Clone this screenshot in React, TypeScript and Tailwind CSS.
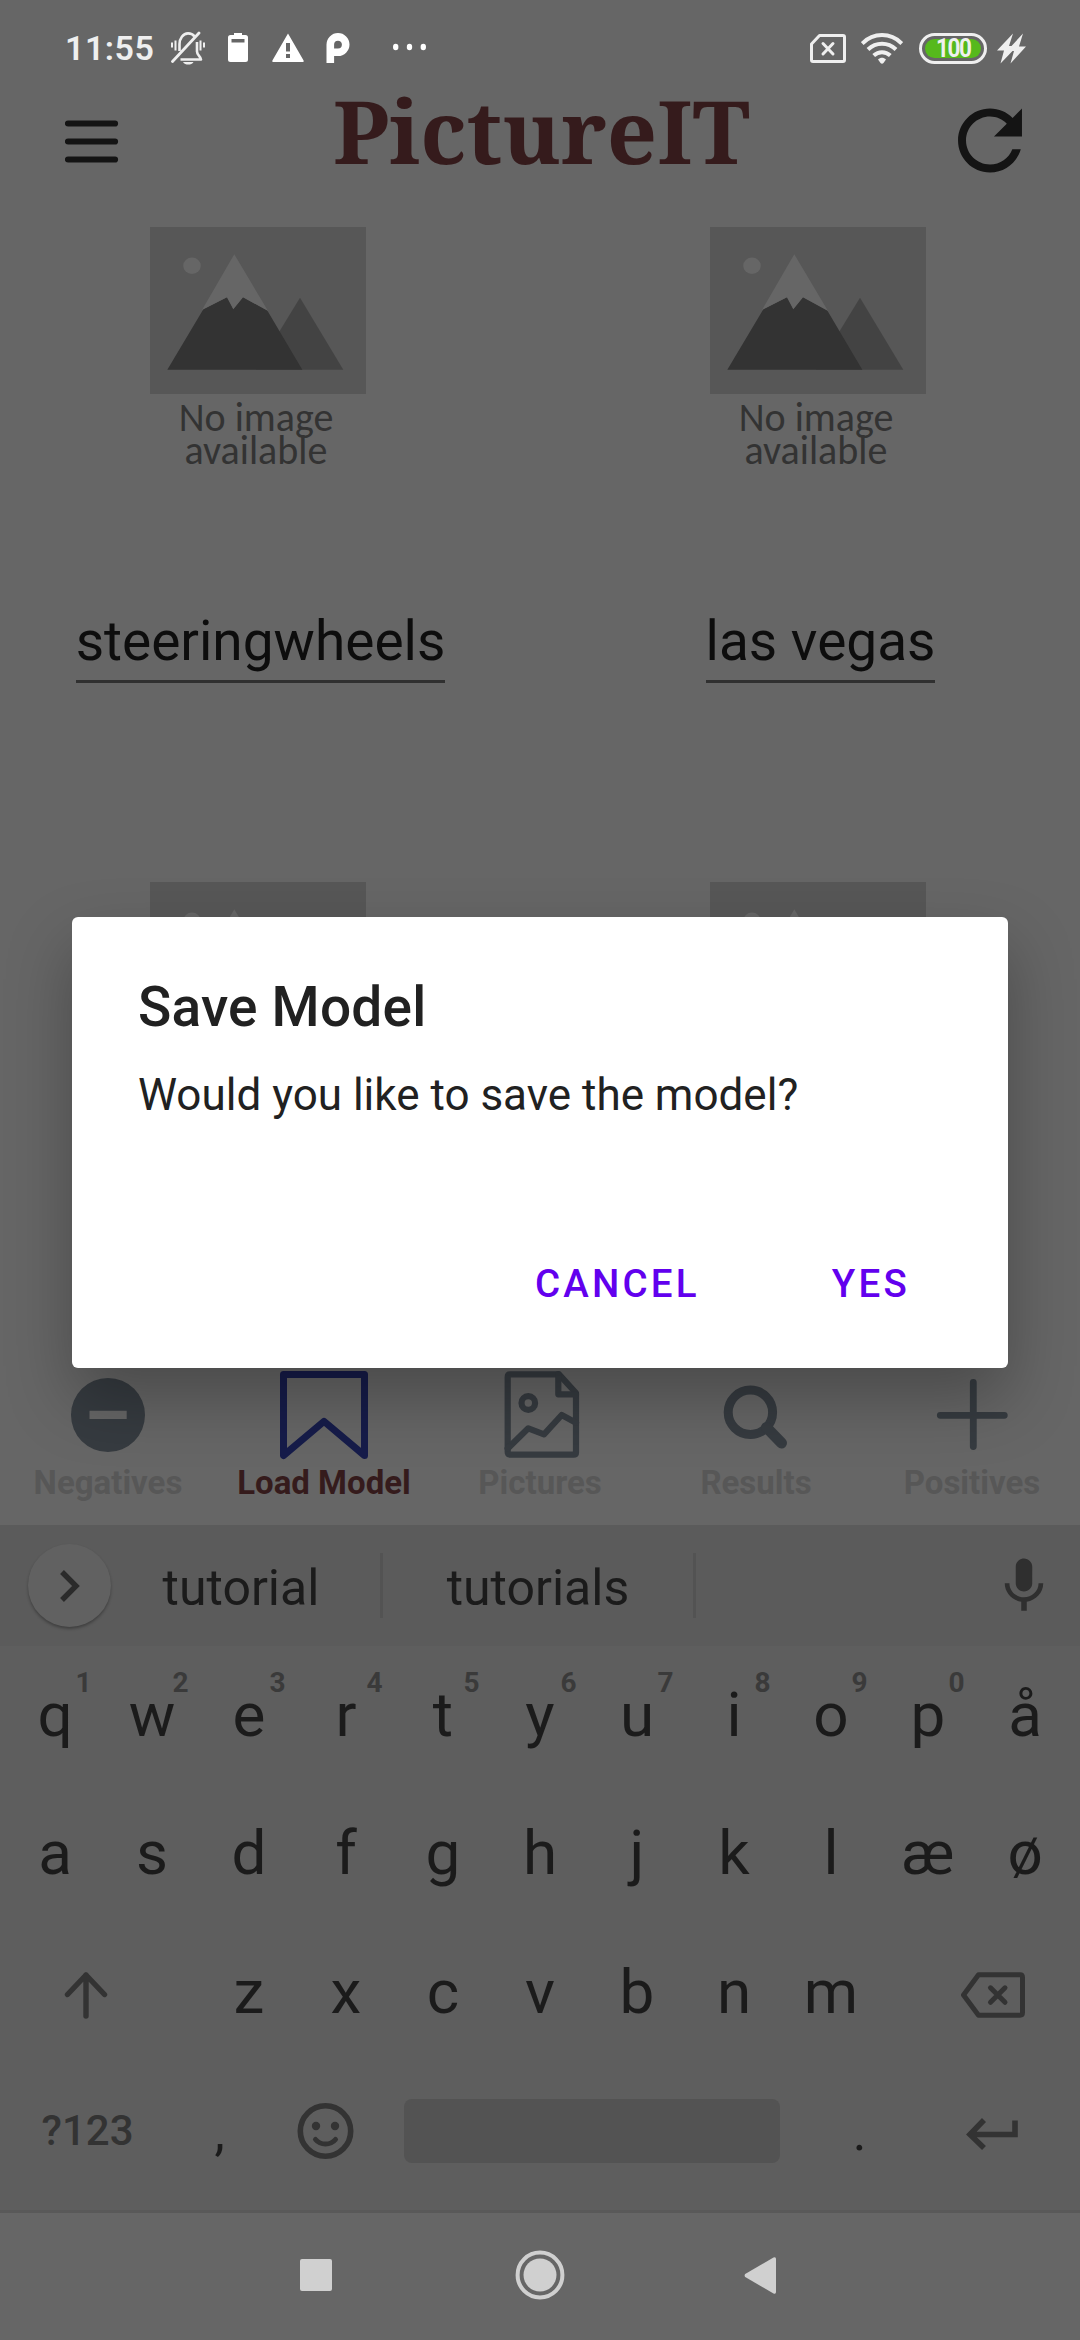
import React from "react";

const ROBOTO = "font-['Roboto',sans-serif]";

function StatusBar() {
  return (
    <div className="flex h-24 shrink-0 items-center pr-[54px] pl-[65px] text-[#efefef]">
      <div className="w-[106px] text-[34px] leading-[40px] font-semibold tracking-[0.5px]">11:55</div>
      <svg width="34" height="34" viewBox="0 0 34 34" fill="none" stroke="currentColor" strokeWidth="2.6">
        <path d="M8.500 20V13c0-5 3.500-10.600 8.500-10.600 3 0 5 1 6.500 3M26 11v9.500c0 4 4 5 4 8H9.500" strokeLinejoin="round" />
        <path d="M1.500 30.500 28 2" strokeWidth="2.800" strokeLinecap="round" />
        <path d="M1 11.500v5M4.500 9.500v10M33 11.500v5M29.500 9.500v10" strokeWidth="2" />
        <path d="M12 31h10.500c-1 1.800-3 2.600-5.200 2.600S13 32.800 12 31Z" fill="currentColor" stroke="none" />
      </svg>
      <svg className="ml-[23px]" width="20" height="30" viewBox="0 0 20 30" fill="#fff">
        <path fillRule="evenodd" d="M6 0h8v2h3.500A2.500 2.500 0 0 1 20 4.500v22a2.500 2.500 0 0 1-2.500 2.500h-15A2.500 2.500 0 0 1 0 26.500v-22A2.500 2.500 0 0 1 2.500 2H6ZM3.500 6v3.500h13V6Z" />
      </svg>
      <svg className="ml-6" width="32" height="30" viewBox="0 0 32 30" fill="#fff">
        <path fillRule="evenodd" d="M16 .5 31.600 27.500Q32 29 31 29H1Q0 29 .4 27.500ZM14 10v8.500h4V10Zm0 11v4h4v-4Z" />
      </svg>
      <svg className="ml-[22px]" width="24" height="30" viewBox="0 0 24 30" fill="none" stroke="#fff" strokeWidth="7.600">
        <path d="M4.300 30V11.600a7.700 7.700 0 1 1 7.700 7.700H7" />
      </svg>
      <svg className="ml-[43px]" width="33" height="30" viewBox="0 0 33 30" fill="#fff">
        <ellipse cx="2.700" cy="14" rx="2.700" ry="3.200" />
        <ellipse cx="16.500" cy="14" rx="2.700" ry="3.200" />
        <ellipse cx="30.300" cy="14" rx="2.700" ry="3.200" />
      </svg>
      <svg className="ml-auto" width="36" height="29" viewBox="0 0 36 29" fill="none" stroke="currentColor" strokeWidth="3">
        <path d="M9.500 1.500H33a1.500 1.500 0 0 1 1.500 1.500v23a1.500 1.500 0 0 1-1.500 1.500H3A1.500 1.500 0 0 1 1.500 26V10Z" strokeLinejoin="round" />
        <path d="m13 9.500 10 10.500m0-10.500L13 20" strokeLinecap="round" />
      </svg>
      <svg className="ml-[15px]" width="42" height="31" viewBox="0 0 42 31" fill="none" stroke="currentColor" strokeWidth="4">
        <path d="M1.200 10.500C12.500-.700 29.500-.700 40.800 10.500M7 16.500c8-7.600 20-7.600 28 0M12.700 22.500c4.800-4.400 11.800-4.400 16.600 0" />
        <path d="M17 26.500c2.500-2.200 5.500-2.200 8 0L22.500 30Q21 31.500 19.500 30Z" fill="currentColor" stroke="none" />
      </svg>
      <div className="ml-4 flex h-[31px] w-[68px] items-center justify-center rounded-full border-3 border-[#efefef] p-[3px]">
        <div className="flex h-[19px] w-full items-center justify-center rounded-full bg-[#56b91c] text-[25px] leading-[19px] font-bold tracking-[-1.500px]">
          <span className="scale-x-90">100</span>
        </div>
      </div>
      <svg className="ml-[10px]" width="29" height="31" viewBox="0 0 29 31" fill="currentColor">
        <path d="M16 .5 0 17.500h7L3.500 30.500 15.500 18H17L13.500 30.500 29 13.500h-7L26 .5 14.500 13H12Z" />
      </svg>
    </div>
  );
}

function Header() {
  return (
    <div className="flex h-[90px] shrink-0 items-center justify-between pr-[43px] pl-[65px] text-[#141414]">
      <svg width="75" height="54" viewBox="0 0 75 54" stroke="currentColor" strokeWidth="6.200" strokeLinecap="round">
        <path d="M3 9.500h47M3 27.500h47M3 45.500h47" />
      </svg>
      <h1 className="mb-[23px] font-['Noto_Serif','DejaVu_Serif_Condensed','DejaVu_Serif',serif] text-[88px] leading-[90px] font-bold text-[#351b1c]">
        PictureIT
      </h1>
      <svg className="mb-[2px]" width="94" height="93" viewBox="0 0 512 512" fill="currentColor">
        <path d="M256 388c-72.597 0-132-59.405-132-132 0-72.601 59.403-132 132-132 36.300 0 69.299 15.400 92.406 39.601L278 234h154V80l-51.698 51.702C348.406 99.798 304.406 80 256 80c-96.797 0-176 79.203-176 176s78.094 176 176 176c81.045 0 148.287-54.134 169.401-128H378.850c-18.745 49.561-67.138 84-122.850 84z" />
      </svg>
    </div>
  );
}

function ModelCell({ name }: { name?: string }) {
  return (
    <div className="flex h-[655px] flex-col items-center">
      <svg width="216" height="167" viewBox="0 0 216 167">
        <path d="M0 0h216v167H0Z" fill="#575757" />
        <ellipse cx="42" cy="38.700" rx="8.800" ry="8.200" fill="#666" />
        <path d="M150 70.700 193.300 142.700H106Z" fill="#434343" />
        <path d="M53.500 82 77 70.300l6.300 11.700L93 70.300 117 83l35.300 59.700h-135Z" fill="#333" />
        <path d="M84.300 27.300 118 84 93 70.300 83.300 82.300 77 70.300 52 83Z" fill="#666" />
      </svg>
      <p className="mt-[7px] mr-[4px] text-center font-['Carlito','Open_Sans',sans-serif] text-[40px] leading-[33px] text-[#333]">
        No image
        <br />
        available
      </p>
      {name && (
        <div className="mt-[142px] ml-[5px] border-b-3 border-[#303030] text-[55px] leading-[64px] text-[#0d0d0d]">
          <div className="pb-[7px]">{name}</div>
        </div>
      )}
    </div>
  );
}

const tabs = [
  {
    label: "Negatives",
    icon: <path fillRule="evenodd" fill="currentColor" stroke="none" d="M50 13a37 37 0 1 0 0 74a37 37 0 1 0 0-74ZM31.500 45.700h37.200V54H31.500Z" />,
  },
  {
    label: "Load Model",
    active: true,
    icon: <path d="M9.500 9.500h81V90.500L50 56.300 9.500 90.500Z" strokeWidth="7" />,
  },
  {
    label: "Pictures",
    icon: (
      <g strokeWidth="6.200">
        <path d="M20 9.300H69L86 28V87.500Q86 89.700 83.500 89.700H20.500Q17.700 89.700 17.700 87V12Q17.700 9.300 20 9.300Z" />
        <path d="M68.300 9V29.300H86M17.700 83.500 38.300 63.300 54 69.300 71.700 50 86 57.700" />
        <circle cx="38.300" cy="38" r="6.800" />
      </g>
    ),
  },
  {
    label: "Results",
    icon: (
      <g>
        <circle cx="44.400" cy="47.300" r="22.200" strokeWidth="9" />
        <path d="m60.500 62.500 15 15.500" strokeWidth="11" />
      </g>
    ),
  },
  { label: "Positives", icon: <path d="M18.300 50.300h64M51.300 17.500v64" strokeWidth="6.800" /> },
];

function TabBar() {
  return (
    <div className="grid h-[165px] shrink-0 grid-cols-5 pt-[5px]">
      {tabs.map((t) => (
        <div key={t.label} className="flex flex-col items-center">
          <svg
            className={t.active ? "text-[#161c4a]" : "text-[#363b40]"}
            width="100"
            height="100"
            viewBox="0 0 100 100"
            fill="none"
            stroke="currentColor"
            strokeLinecap="round"
            strokeLinejoin="round"
          >
            {t.icon}
          </svg>
          <span className={`text-[33px] leading-9 font-bold ${t.active ? "text-[#351b1c]" : "text-[#575757]"}`}>{t.label}</span>
        </div>
      ))}
    </div>
  );
}

function Suggestions() {
  return (
    <div className="flex h-[121px] shrink-0 items-center bg-[#5b5b5b] pl-[28px] text-[50px] leading-[60px] text-[#1b1b1b]">
      <div className="flex size-[83px] items-center justify-center rounded-full bg-[#616161] shadow-[0_2px_3px_rgba(0,0,0,0.3)]">
        <svg width="22" height="34" viewBox="0 0 22 34" fill="none" stroke="#2b2b2b" strokeWidth="5.400">
          <path d="m3 3 14 14L3 31" />
        </svg>
      </div>
      <div className="w-[269px] pt-1 pr-[9px] text-center">tutorial</div>
      <div className="h-[65px] w-[3px] bg-[#535353]" />
      <div className="w-[310px] pt-1 text-center">tutorials</div>
      <div className="h-[65px] w-[3px] bg-[#535353]" />
      <svg className="mr-[23px] ml-auto" width="66" height="66" viewBox="0 0 24 24" fill="#2f2f2f">
        <path d="M12 14c1.660 0 2.990-1.340 2.990-3L15 5c0-1.660-1.340-3-3-3S9 3.340 9 5v6c0 1.660 1.340 3 3 3zm5.300-3c0 3-2.540 5.100-5.300 5.100S6.700 14 6.700 11H5c0 3.410 2.720 6.230 6 6.720V21h2v-3.280c3.280-.480 6-3.300 6-6.720h-1.700z" />
      </svg>
    </div>
  );
}

function Key({ label, hint }: { label: string; hint?: string }) {
  return (
    <div className="relative flex w-[97px] items-center justify-center">
      {label}
      {hint && (
        <span className="absolute top-[19px] right-[12px] text-[28px] leading-[36px] font-bold text-[#3a3a3a]">{hint}</span>
      )}
    </div>
  );
}

function Keyboard() {
  return (
    <div className="h-[564px] shrink-0 bg-[#5e5e5e] px-[6.500px] text-[62px] leading-[72px] text-[#1b1b1b]">
      <div className="flex h-[138px]">
        {"qwertyuiopå".split("").map((k, i) => (
          <Key key={k} label={k} hint={i < 10 ? String((i + 1) % 10) : undefined} />
        ))}
      </div>
      <div className="flex h-[138px]">
        {"asdfghjklæø".split("").map((k) => (
          <Key key={k} label={k} />
        ))}
      </div>
      <div className="flex h-[139px] items-center">
        <div className="flex w-[194px] pt-[6px] pl-[57px]">
          <svg width="44" height="48" viewBox="0 0 44 48" fill="none" stroke="#333" strokeWidth="5.400" strokeLinecap="round" strokeLinejoin="round">
            <path d="M22 45V4M3.500 23.500 22 4l18.500 19.500" />
          </svg>
        </div>
        {"zxcvbnm".split("").map((k) => (
          <Key key={k} label={k} />
        ))}
        <div className="flex pt-[6px] pl-[80px]">
          <svg width="66" height="46" viewBox="0 0 66 46" fill="none" stroke="#333" strokeWidth="5" strokeLinecap="round" strokeLinejoin="round">
            <path d="M3.500 23 18.500 2.800H60Q62.500 2.800 62.500 5.500V40.500Q62.500 43.200 60 43.200H18.500Z" />
            <path d="m30.500 15.800 14.500 14.500m0-14.500L30.500 30.300" />
          </svg>
        </div>
      </div>
      <div className="flex h-[139px] items-center">
        <div className="w-[158px] pl-[35px] text-[42px] leading-[50px] font-medium text-[#333]">?123</div>
        <div className="w-[110px] pt-1 text-center text-[52px]">,</div>
        <svg className="ml-[21px]" width="60" height="60" viewBox="0 0 60 60" fill="none" stroke="#333" strokeWidth="5.600" strokeLinecap="round">
          <circle cx="29.500" cy="30" r="25.200" />
          <path d="M19.500 38.500c5 6 15 6 20 0" strokeWidth="5" />
          <circle cx="20" cy="25" r="4.200" fill="#333" stroke="none" />
          <circle cx="39" cy="25" r="4.200" fill="#333" stroke="none" />
        </svg>
        <div className="ml-[48.500px] h-16 w-[376px] rounded-lg bg-[#535353]" />
        <div className="w-[159px] pt-1 text-center text-[52px]">.</div>
        <svg className="mt-[6px] ml-[26px]" width="54" height="34" viewBox="0 0 54 34" fill="none" stroke="#333" strokeWidth="5.600">
          <path d="M50 3.500V17.500H5M19 3 5 17.500 19 31" />
        </svg>
      </div>
    </div>
  );
}

function SystemNav() {
  return (
    <div className="flex h-[130px] shrink-0 items-center border-t-3 border-[#595959] pb-[3px] pl-[300px] text-[#d0d0d0]">
      <div className="size-8 rounded-xs bg-[#d0d0d0]" />
      <svg className="ml-[183px]" width="50" height="50" viewBox="0 0 50 50" fill="none" stroke="currentColor">
        <circle cx="25" cy="25" r="22.400" strokeWidth="4" />
        <circle cx="25" cy="25" r="16.500" fill="currentColor" stroke="none" />
      </svg>
      <svg className="ml-[179px]" width="32" height="37" viewBox="0 0 32 37" fill="currentColor">
        <path d="M1.200 17Q0 18.500 1.200 20L29.500 36.500Q32 37.500 32 35V2Q32-.500 29.500 .5Z" />
      </svg>
    </div>
  );
}

function SaveDialog() {
  return (
    <div className="absolute top-[917px] left-[72px] flex h-[451px] w-[936px] flex-col rounded-md bg-white pt-[57px] pl-[66px] text-[#212121]">
      <h2 className="text-[55px] leading-[66px] font-medium tracking-[0.200px]">Save Model</h2>
      <p className="mt-[27px] text-[44px] leading-[56px]">Would you like to save the model?</p>
      <div className="mt-[136px] flex justify-end gap-[132px] pr-[98px] text-[38.500px] leading-[50px] font-medium tracking-[3.200px] text-[#6200ee]">
        <span>CANCEL</span>
        <span>YES</span>
      </div>
    </div>
  );
}

export default function App() {
  return (
    <div className={`relative flex h-[2340px] w-[1080px] flex-col overflow-hidden bg-[#666] ${ROBOTO}`}>
      <div className="relative flex h-[1525px] shrink-0 flex-col overflow-hidden">
        <StatusBar />
        <Header />
        <div className="grid h-[1174px] shrink-0 grid-cols-[516px_440px] gap-x-[82px] overflow-hidden pt-[41px]">
          <ModelCell name="steeringwheels" />
          <ModelCell name="las vegas" />
          <ModelCell />
          <ModelCell />
        </div>
        <TabBar />
        <div className="absolute top-[917px] left-[72px] h-[451px] w-[936px] rounded-md shadow-[0_30px_66px_rgba(0,0,0,0.28)]" />
      </div>
      <Suggestions />
      <Keyboard />
      <SystemNav />
      <SaveDialog />
    </div>
  );
}
